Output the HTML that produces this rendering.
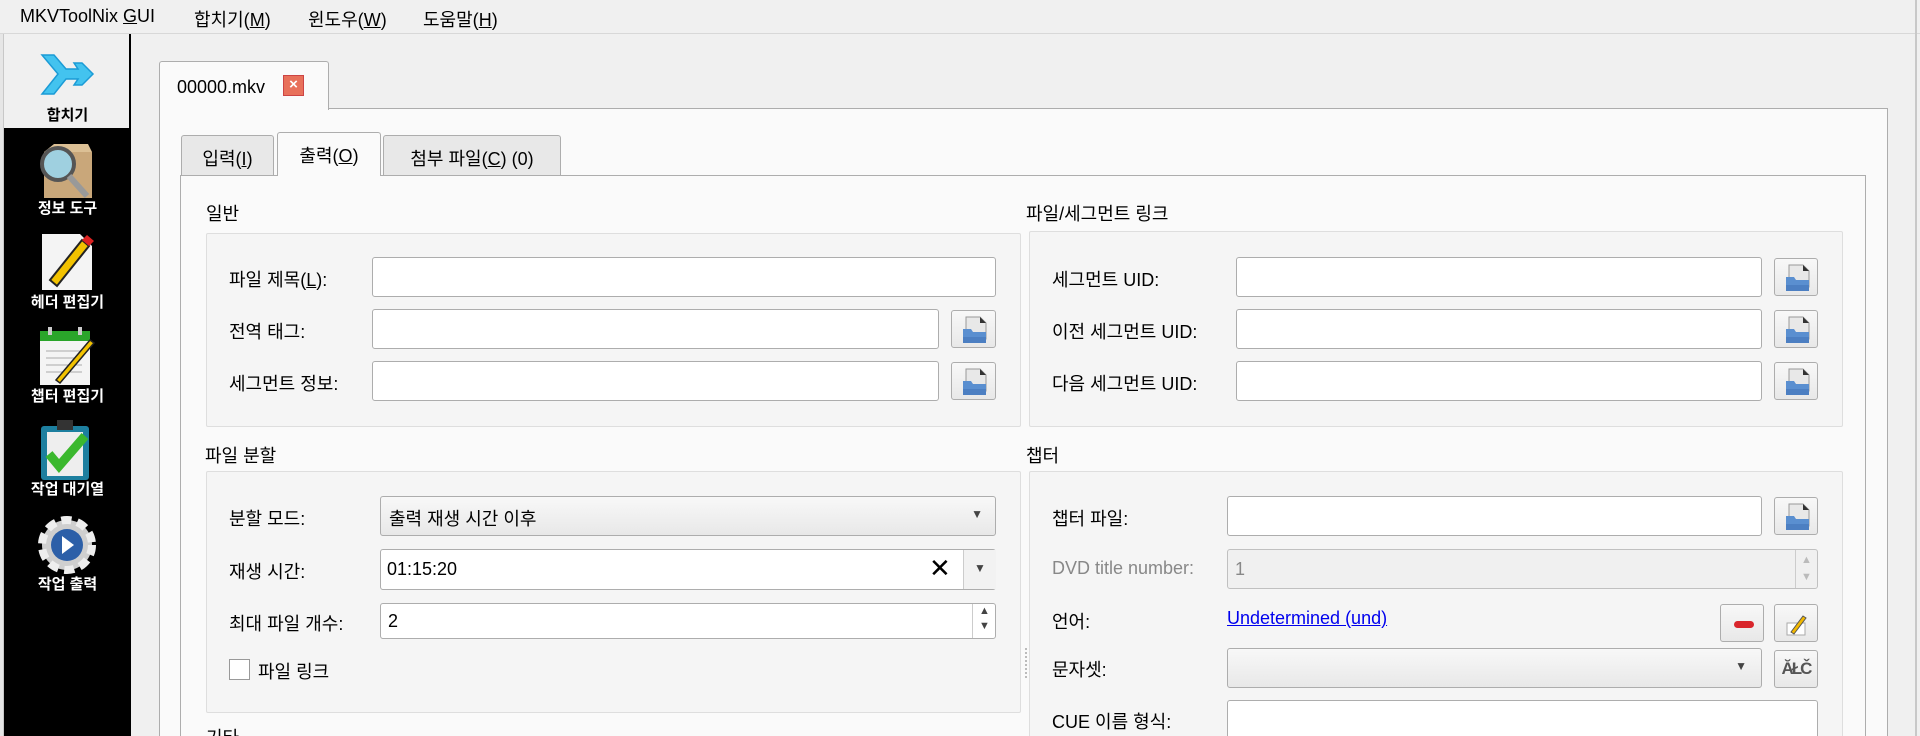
<!DOCTYPE html>
<html style="overflow:hidden;height:736px"><head><meta charset="utf-8"><style>
*{box-sizing:border-box;margin:0;padding:0}
body{width:1920px;height:736px;overflow:hidden;background:#f0f0f0;font-family:"Liberation Sans","Noto Sans CJK KR",sans-serif;font-size:18px;color:#000;position:relative}
.a{position:absolute}
.menu{left:0;top:0;width:1920px;height:34px;border-bottom:1px solid #d8d8d8;background:#f0f0f0}
.menu span{position:absolute;top:6px;font-size:18px}
.side{left:4px;top:34px;width:127px;height:702px;background:#000;border-right:2px solid #000}
.sl{font-size:15px;font-weight:bold;color:#fff;width:127px;text-align:center;left:4px}
.inp{background:#fff;border:1px solid #adadad;border-radius:3px}
.btn{background:linear-gradient(#f8f8f8,#e8e8e8);border:1px solid #adadad;border-radius:3px}
.lbl{font-size:18px}
.grp{background:#f5f5f5;border:1px solid #dedede;border-radius:2px}
.tab{border:1px solid #adadad;border-bottom:none;background:#e8e8e8;border-radius:3px 3px 0 0;text-align:center;padding-top:9px}
u{text-decoration:underline}
</style></head><body>
<div class="a menu">
<span style="left:20px">MKVToolNix <u>G</u>UI</span>
<span style="left:194px">합치기(<u>M</u>)</span>
<span style="left:308px">윈도우(<u>W</u>)</span>
<span style="left:423px">도움말(<u>H</u>)</span>
</div>
<div class="a" style="left:0;top:34px;width:4px;height:702px;background:#e6e6e6;border-right:1px solid #c8c8c8"></div>
<div class="a side"></div>
<div class="a" style="left:4px;top:34px;width:125px;height:94px;background:#f0f0f0"></div>
<svg class="a" style="left:40px;top:52px" width="55" height="45" viewBox="0 0 55 45"><path d="M2 3h12l12 14h12l-4-6h8l11 11-11 11h-8l4-6H26L14 42H2l16-20z" fill="#43c3ef" stroke="#1b9bd6" stroke-width="1.5"/></svg>
<div class="a sl" style="top:104px;color:#000">합치기</div>
<svg class="a" style="left:34px;top:142px" width="64" height="60"><rect x="10" y="10" width="48" height="46" fill="#c9a77a"/><path d="M10 10l10-8h34l4 8z" fill="#dcc095"/><circle cx="24" cy="22" r="16" fill="#9fd0e0" stroke="#555" stroke-width="4"/><path d="M35 34l18 20" stroke="#999" stroke-width="6"/></svg>
<div class="a sl" style="top:197px">정보 도구</div>
<svg class="a" style="left:40px;top:232px" width="55" height="60"><path d="M2 2h38l12 12v44H2z" fill="#f4f4f4"/><path d="M10 48l32-40 7 6-32 40z" fill="#f2c200" stroke="#222" stroke-width="2"/><path d="M42 8l5-5 7 6-5 5z" fill="#d22"/></svg>
<div class="a sl" style="top:291px">헤더 편집기</div>
<svg class="a" style="left:38px;top:325px" width="60" height="62"><rect x="2" y="6" width="50" height="54" fill="#f4f4f4"/><rect x="2" y="6" width="50" height="10" fill="#2aa52a"/><rect x="10" y="2" width="4" height="8" fill="#ccc"/><rect x="40" y="2" width="4" height="8" fill="#ccc"/><path d="M8 26h36M8 33h36M8 40h36M8 47h36" stroke="#aaa"/><path d="M18 55l34-40 4 3-34 40z" fill="#f2c200" stroke="#222" stroke-width="1.5"/></svg>
<div class="a sl" style="top:385px">챕터 편집기</div>
<svg class="a" style="left:39px;top:420px" width="58" height="60"><rect x="2" y="6" width="48" height="54" rx="3" fill="#1d7f9f"/><rect x="8" y="12" width="36" height="44" fill="#eee"/><rect x="18" y="0" width="16" height="10" fill="#333"/><path d="M10 34l10 12 26-30" stroke="#3bb82e" stroke-width="9" fill="none"/></svg>
<div class="a sl" style="top:478px">작업 대기열</div>
<svg class="a" style="left:36px;top:515px" width="62" height="60"><circle cx="31" cy="30" r="25" fill="#cfcfcf" stroke="#eee" stroke-width="8" stroke-dasharray="10 6"/><circle cx="31" cy="30" r="16" fill="#2c5fa8"/><path d="M26 21l12 9-12 9z" fill="#fff"/></svg>
<div class="a sl" style="top:573px">작업 출력</div>

<div class="a" style="left:159px;top:108px;width:1729px;height:640px;background:#fafafa;border:1px solid #adadad"></div>
<div class="a" style="left:159px;top:61px;width:170px;height:49px;background:#fafafa;border:1px solid #adadad;border-bottom:none;border-radius:3px 3px 0 0"></div>
<div class="a" style="left:177px;top:77px">00000.mkv</div>
<div class="a" style="left:283px;top:75px;width:21px;height:21px;background:#e8705a;border:1px solid #c44;color:#fff;font-size:15px;text-align:center;line-height:18px;font-weight:bold">×</div>

<div class="a" style="left:180px;top:175px;width:1686px;height:580px;background:#fafafa;border:1px solid #adadad"></div>
<div class="a tab" style="left:181px;top:135px;width:93px;height:40px">입력(<u>I</u>)</div>
<div class="a tab" style="left:277px;top:132px;width:104px;height:44px;background:#fafafa">출력(<u>O</u>)</div>
<div class="a tab" style="left:383px;top:135px;width:178px;height:40px">첨부 파일(<u>C</u>) (0)</div>

<div class="a lbl" style="left:206px;top:200px">일반</div>
<div class="a grp" style="left:206px;top:233px;width:815px;height:194px"></div>
<div class="a lbl" style="left:229px;top:266px">파일 제목(<u>L</u>):</div>
<div class="a inp" style="left:372px;top:257px;width:624px;height:40px"></div>
<div class="a lbl" style="left:229px;top:318px">전역 태그:</div>
<div class="a inp" style="left:372px;top:309px;width:567px;height:40px"></div>
<div class="a lbl" style="left:229px;top:370px">세그먼트 정보:</div>
<div class="a inp" style="left:372px;top:361px;width:567px;height:40px"></div>

<div class="a lbl" style="left:205px;top:442px">파일 분할</div>
<div class="a grp" style="left:206px;top:471px;width:815px;height:242px"></div>
<div class="a lbl" style="left:229px;top:505px">분할 모드:</div>
<div class="a btn" style="left:380px;top:496px;width:616px;height:40px"><span style="position:absolute;left:8px;top:8px">출력 재생 시간 이후</span><span style="position:absolute;right:12px;top:10px;font-size:12px;color:#444">▼</span></div>
<div class="a lbl" style="left:229px;top:558px">재생 시간:</div>
<div class="a inp" style="left:380px;top:549px;width:616px;height:41px"><span style="position:absolute;left:6px;top:9px">01:15:20</span><span style="position:absolute;left:548px;top:3px;font-size:26px;font-weight:300">✕</span><div style="position:absolute;left:582px;top:0;width:33px;height:39px;border-left:1px solid #ccc;background:#f2f2f2;font-size:12px;color:#444;text-align:center;padding-top:11px">▼</div></div>
<div class="a lbl" style="left:229px;top:610px">최대 파일 개수:</div>
<div class="a inp" style="left:380px;top:603px;width:616px;height:36px"><span style="position:absolute;left:7px;top:7px">2</span><div style="position:absolute;left:591px;top:0;width:24px;height:34px;border-left:1px solid #ccc;font-size:11px;color:#444;text-align:center;line-height:15px">▲<br>▼</div></div>
<div class="a" style="left:229px;top:659px;width:21px;height:21px;background:#fff;border:1px solid #999"></div>
<div class="a lbl" style="left:258px;top:658px">파일 링크</div>
<div class="a lbl" style="left:206px;top:724px">기타</div>

<div class="a lbl" style="left:1026px;top:200px">파일/세그먼트 링크</div>
<div class="a grp" style="left:1029px;top:231px;width:814px;height:196px"></div>
<div class="a lbl" style="left:1052px;top:266px">세그먼트 UID:</div>
<div class="a inp" style="left:1236px;top:257px;width:526px;height:40px"></div>
<div class="a lbl" style="left:1052px;top:318px">이전 세그먼트 UID:</div>
<div class="a inp" style="left:1236px;top:309px;width:526px;height:40px"></div>
<div class="a lbl" style="left:1052px;top:370px">다음 세그먼트 UID:</div>
<div class="a inp" style="left:1236px;top:361px;width:526px;height:40px"></div>

<div class="a lbl" style="left:1026px;top:442px">챕터</div>
<div class="a grp" style="left:1029px;top:471px;width:814px;height:280px"></div>
<div class="a lbl" style="left:1052px;top:505px">챕터 파일:</div>
<div class="a inp" style="left:1227px;top:496px;width:535px;height:40px"></div>
<div class="a lbl" style="left:1052px;top:558px;color:#888">DVD title number:</div>
<div class="a" style="left:1227px;top:549px;width:591px;height:40px;background:#f0f0f0;border:1px solid #c0c0c0;border-radius:3px"><span style="position:absolute;left:7px;top:9px;color:#888">1</span><div style="position:absolute;right:0;top:0;width:22px;height:38px;border-left:1px solid #ccc;font-size:11px;color:#bbb;text-align:center;line-height:17px;padding-top:2px">▲<br>▼</div></div>
<div class="a lbl" style="left:1052px;top:608px">언어:</div>
<div class="a lbl" style="left:1227px;top:608px;color:#0000ee;text-decoration:underline">Undetermined (und)</div>
<div class="a btn" style="left:1720px;top:604px;width:44px;height:38px"><div style="position:absolute;left:13px;top:16px;width:20px;height:7px;border-radius:4px;background:#d9262c"></div></div>
<div class="a btn" style="left:1774px;top:604px;width:44px;height:38px"><svg style="position:absolute;left:11px;top:6px" width="22" height="26"><rect x="1" y="12" width="18" height="12" fill="#fff" stroke="#aaa"/><path d="M5 21l12-16 3 2-12 16z" fill="#f2b800" stroke="#555"/></svg></div>
<div class="a lbl" style="left:1052px;top:656px">문자셋:</div>
<div class="a btn" style="left:1227px;top:648px;width:535px;height:40px"><span style="position:absolute;right:14px;top:10px;font-size:12px;color:#444">▼</span></div>
<div class="a btn" style="left:1774px;top:650px;width:44px;height:38px;text-align:center;font-size:17px;font-weight:bold;color:#555;padding-top:8px;letter-spacing:-2px">ĂŁČ</div>
<div class="a lbl" style="left:1052px;top:708px">CUE 이름 형식:</div>
<div class="a inp" style="left:1227px;top:700px;width:591px;height:40px"></div>

<div class="a" style="left:1025px;top:648px;width:2px;height:30px;border-left:2px dotted #bbb"></div>
<div class="a" style="left:1915px;top:0;width:2px;height:736px;background:#c8c8c8"></div>

<svg width="0" height="0" style="position:absolute"><defs><g id="fo"><path d="M14 6h14l6 6v16H14z" fill="#e8e8e8" stroke="#999"/><path d="M28 6l6 6h-6z" fill="#333"/><path d="M11 18h8l2 3h13v11H11z" fill="#5a8fd0"/><rect x="11" y="26" width="23" height="6" fill="#4c7fc2"/></g></defs></svg>
<div class="a btn" style="left:951px;top:310px;width:45px;height:38px"><svg width="45" height="38"><use href="#fo"/></svg></div>
<div class="a btn" style="left:951px;top:362px;width:45px;height:38px"><svg width="45" height="38"><use href="#fo"/></svg></div>
<div class="a btn" style="left:1774px;top:258px;width:44px;height:38px"><svg width="45" height="38"><use href="#fo"/></svg></div>
<div class="a btn" style="left:1774px;top:310px;width:44px;height:38px"><svg width="45" height="38"><use href="#fo"/></svg></div>
<div class="a btn" style="left:1774px;top:362px;width:44px;height:38px"><svg width="45" height="38"><use href="#fo"/></svg></div>
<div class="a btn" style="left:1774px;top:497px;width:44px;height:38px"><svg width="45" height="38"><use href="#fo"/></svg></div>
</body></html>
